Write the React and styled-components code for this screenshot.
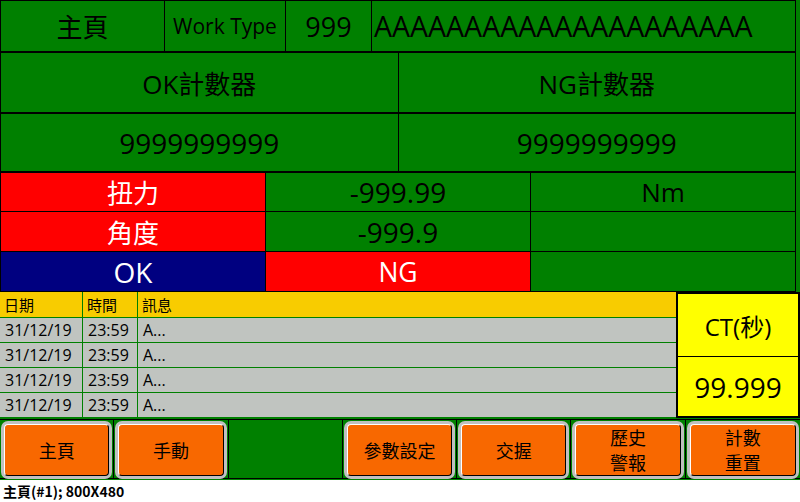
import React from "react";
import styled, { createGlobalStyle } from "styled-components";

const GlobalStyle = createGlobalStyle`
  html, body {
    margin: 0;
    padding: 0;
    background: #ffffff;
  }
  body {
    font-family: "Open Sans", "Noto Sans CJK TC", sans-serif;
    color: #000000;
  }
`;

const Screen = styled.div`
  width: 800px;
  height: 480px;
  background: #008000;
  display: flex;
  flex-direction: column;
  overflow: hidden;
`;

const Panel = styled.div`
  width: 796px;
  box-sizing: border-box;
  border-top: 1px solid #000;
  border-left: 1px solid #000;
`;

const Row = styled.div`
  display: grid;
  grid-template-columns: ${p => p.$cols};
  height: ${p => p.$h}px;
  box-sizing: border-box;
  border-bottom: ${p => p.$line || 1}px solid #000;
`;

const Cell = styled.div`
  display: flex;
  align-items: center;
  justify-content: ${p => (p.$left ? "flex-start" : "center")};
  padding-left: ${p => (p.$left ? "2px" : "0")};
  background: ${p => p.$bg || "#008000"};
  color: ${p => p.$color || "#000"};
  font-size: ${p => p.$size || 26}px;
  border-right: 1px solid #000;
  white-space: nowrap;
  overflow: hidden;
`;

const Bottom = styled.div`
  display: flex;
  height: 127px;
`;

const Table = styled.div`
  width: 676px;
  display: flex;
  flex-direction: column;
`;

const TableRow = styled.div`
  display: grid;
  grid-template-columns: 83px 55px 1fr;
  height: ${p => (p.$head ? 26 : 25)}px;
  box-sizing: border-box;
  border-bottom: 1px solid #008000;
  background: ${p => (p.$head ? "#f8cc00" : "#c0c4c0")};
`;

const TableCell = styled.div`
  display: flex;
  align-items: center;
  padding-left: ${p => (p.$head ? 4 : 5)}px;
  font-size: ${p => (p.$head ? 15 : 16)}px;
  border-right: ${p => (p.$last ? "none" : "1px solid #008000")};
  white-space: nowrap;
`;

const CtBox = styled.div`
  width: 124px;
  height: 126px;
  box-sizing: border-box;
  border: 2px solid #000;
  background: #ffff00;
  display: grid;
  grid-template-rows: 63px 1fr;
`;

const CtPart = styled.div`
  display: flex;
  align-items: center;
  justify-content: center;
  font-size: ${p => p.$size}px;
  border-bottom: ${p => (p.$top ? "1px solid #000" : "none")};
`;

const ButtonBar = styled.div`
  display: grid;
  grid-template-columns: repeat(7, 1fr);
  height: 60px;
  box-sizing: border-box;
  border-top: 1px solid #000;
  border-bottom: 1px solid #000;
`;

const Slot = styled.div`
  display: flex;
  padding: 1px 1px 0 1px;
  border-right: 1px solid #000;
  &:last-child {
    border-right: none;
  }
`;

const Button = styled.div`
  flex: 1;
  display: flex;
  background: #c0c0c0;
  border-radius: 7px;
  padding: 3px;
`;

const ButtonFace = styled.div`
  flex: 1;
  display: flex;
  flex-direction: column;
  align-items: center;
  justify-content: center;
  background: #f86800;
  border-radius: 4px;
  border: 1px solid;
  border-color: #ffffff #000000 #000000 #ffffff;
  font-family: "Noto Sans CJK TC", sans-serif;
  font-size: 18px;
  line-height: 25px;
`;

const Status = styled.div`
  height: 22px;
  line-height: 22px;
  padding-left: 3px;
  font-family: "Noto Sans CJK TC", sans-serif;
  font-weight: 700;
  font-size: 14px;
`;

const logs = [
  ["31/12/19", "23:59", "A..."],
  ["31/12/19", "23:59", "A..."],
  ["31/12/19", "23:59", "A..."],
  ["31/12/19", "23:59", "A..."],
];

const buttons = [["主頁"], ["手動"], null, ["參數設定"], ["交握"], ["歷史", "警報"], ["計數", "重置"]];

export default function App() {
  return (
    <>
      <GlobalStyle />
      <Screen>
        <Panel>
          <Row $cols="164px 121px 86px 1fr" $h={52} $line={2}>
            <Cell $size={26}>主頁</Cell>
            <Cell $size={21}>Work Type</Cell>
            <Cell $size={27}>999</Cell>
            <Cell $size={28.5} $left>AAAAAAAAAAAAAAAAAAAAA</Cell>
          </Row>
          <Row $cols="1fr 1fr" $h={61} $line={2}>
            <Cell>OK計數器</Cell>
            <Cell>NG計數器</Cell>
          </Row>
          <Row $cols="1fr 1fr" $h={59} $line={2}>
            <Cell $size={28}>9999999999</Cell>
            <Cell $size={28}>9999999999</Cell>
          </Row>
          <Row $cols="1fr 1fr 1fr" $h={39}>
            <Cell $bg="#ff0000" $color="#fff">扭力</Cell>
            <Cell $size={28}>-999.99</Cell>
            <Cell>Nm</Cell>
          </Row>
          <Row $cols="1fr 1fr 1fr" $h={40}>
            <Cell $bg="#ff0000" $color="#fff">角度</Cell>
            <Cell $size={28}>-999.9</Cell>
            <Cell />
          </Row>
          <Row $cols="1fr 1fr 1fr" $h={40}>
            <Cell $bg="#000080" $color="#fff" $size={28}>OK</Cell>
            <Cell $bg="#ff0000" $color="#fff" $size={26.5}>NG</Cell>
            <Cell />
          </Row>
        </Panel>
        <Bottom>
          <Table>
            <TableRow $head>
              <TableCell $head>日期</TableCell>
              <TableCell $head>時間</TableCell>
              <TableCell $head $last>訊息</TableCell>
            </TableRow>
            {logs.map((r, i) => (
              <TableRow key={i}>
                <TableCell>{r[0]}</TableCell>
                <TableCell>{r[1]}</TableCell>
                <TableCell $last>{r[2]}</TableCell>
              </TableRow>
            ))}
          </Table>
          <CtBox>
            <CtPart $top $size={24}>CT(秒)</CtPart>
            <CtPart $size={28}>99.999</CtPart>
          </CtBox>
        </Bottom>
        <ButtonBar>
          {buttons.map((b, i) => (
            <Slot key={i}>
              {b && (
                <Button>
                  <ButtonFace>
                    {b.map(line => (
                      <span key={line}>{line}</span>
                    ))}
                  </ButtonFace>
                </Button>
              )}
            </Slot>
          ))}
        </ButtonBar>
      </Screen>
      <Status>主頁(#1); 800X480</Status>
    </>
  );
}
